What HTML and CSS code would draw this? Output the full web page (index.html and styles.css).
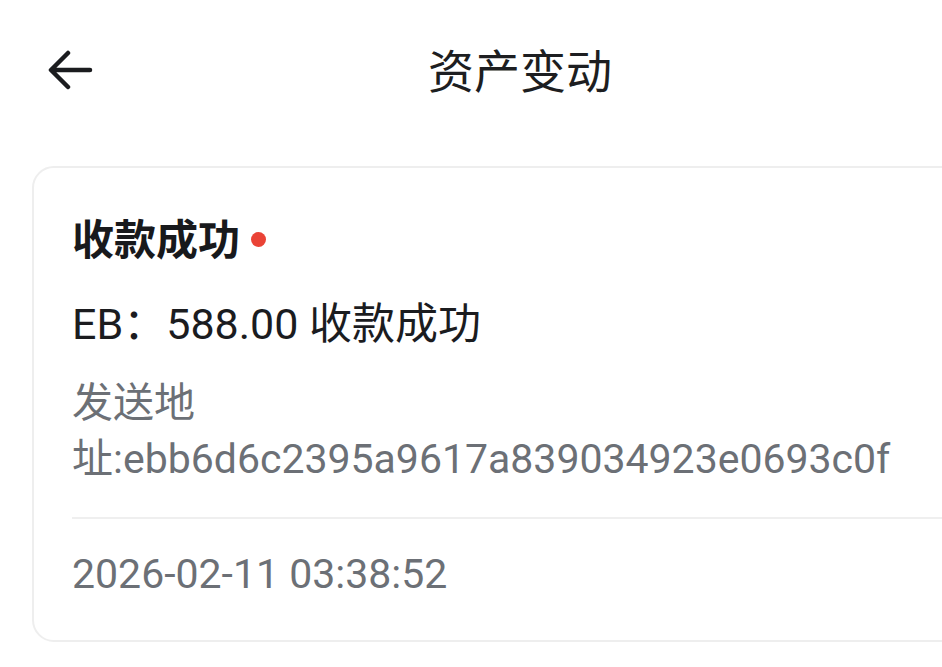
FILE: index.html
```html
<!DOCTYPE html>
<html lang="zh-CN">
<head>
<meta charset="utf-8">
<title>资产变动</title>
<link rel="stylesheet" href="styles.css">
</head>
<body>
<div class="screen">
  <header class="topbar">
    <button class="back" aria-label="返回">
      <svg width="46" height="40" viewBox="0 0 46 40" fill="none" stroke="#1b1c1f" stroke-width="4.5" stroke-linecap="round" stroke-linejoin="round">
        <path d="M42 20H4M20 3L3 20L20 37"/>
      </svg>
    </button>
    <h1 class="title">资产变动</h1>
  </header>
  <main class="list">
    <section class="card">
      <div class="card-head">
        <span class="card-title">收款成功</span>
        <span class="dot"></span>
      </div>
      <p class="amount">EB：588.00 收款成功</p>
      <p class="address">发送地址:ebb6d6c2395a9617a839034923e0693c0f</p>
      <div class="divider"></div>
      <p class="time">2026-02-11 03:38:52</p>
    </section>
  </main>
</div>
</body>
</html>
```

FILE: styles.css
```css
html, body {
  margin: 0;
  padding: 0;
  background: #ffffff;
  overflow: hidden;
}
body {
  font-family: Roboto, "Noto Sans CJK SC", sans-serif;
  color: #1b1c1f;
}
.screen {
  width: 1040px;
}
.topbar {
  height: 144px;
  display: flex;
  align-items: center;
  justify-content: center;
  position: relative;
}
.back {
  position: absolute;
  left: 48px;
  top: 50px;
  padding: 0;
  margin: 0;
  border: 0;
  background: none;
  width: 46px;
  height: 40px;
  display: block;
}
.back svg { display: block; }
.title {
  margin: 0;
  font-size: 46px;
  font-weight: 400;
  line-height: 50px;
  color: #1d1e21;
}
.list {
  padding: 22px 32px 0;
}
.card {
  border: 2px solid #eeeeee;
  border-radius: 22px;
  padding: 48px 38px 41px;
  background: #fff;
}
.card-head {
  display: flex;
  align-items: center;
  gap: 11px;
  height: 50px;
}
.card-title {
  font-size: 42px;
  font-weight: 700;
  line-height: 50px;
  color: #18191c;
}
.dot {
  width: 15px;
  height: 15px;
  border-radius: 50%;
  background: #ea4336;
  margin-top: -3px;
}
.amount {
  margin: 33px 0 0;
  font-size: 43px;
  line-height: 50px;
  color: #1b1c1f;
}
.address {
  margin: 26px 0 0;
  font-size: 41px;
  line-height: 56px;
  color: #6c7076;
  max-width: 840px;
}
.divider {
  margin-top: 30px;
  height: 2px;
  background: #efefef;
}
.time {
  margin: 30px 0 0;
  font-size: 41px;
  line-height: 50px;
  color: #6c7076;
}
```
